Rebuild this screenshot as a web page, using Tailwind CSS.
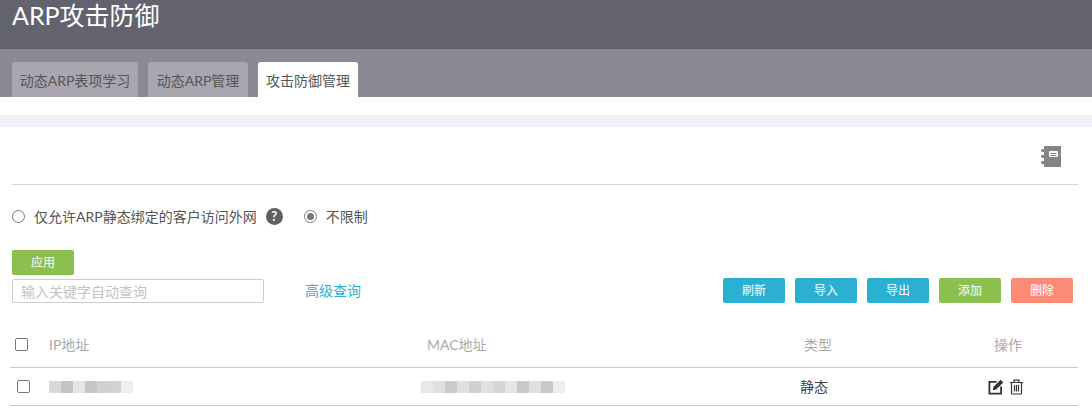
<!DOCTYPE html>
<html lang="zh-CN">
<head>
    <meta charset="UTF-8">
    <title>ARP攻击防御</title>
    <script src="https://cdn.jsdelivr.net/npm/@tailwindcss/browser@4"></script>
</head>
<body class="bg-white overflow-hidden text-[14px] text-[#555] font-['Lato','Noto_Sans_CJK_SC',sans-serif]">

<!-- Title -->
<div class="h-[49px] bg-[#62636f] px-3">
    <h1 class="text-[25px] leading-[30px] text-white">ARP攻击防御</h1>
</div>

<!-- Tabs -->
<div class="h-[48px] bg-[#8c8994] px-3 pt-[13px] flex gap-[10px] text-[14px]">
    <div class="w-[126px] h-[35px] leading-[37px] text-center rounded-t-[3px] bg-[#a9a6b1]">动态ARP表项学习</div>
    <div class="w-[100px] h-[35px] leading-[37px] text-center rounded-t-[3px] bg-[#a9a6b1]">动态ARP管理</div>
    <div class="w-[100px] h-[35px] leading-[37px] text-center rounded-t-[3px] bg-white">攻击防御管理</div>
</div>

<div class="mt-[18px] h-[12px] bg-[#eeeff8]"></div>

<div class="px-3 pr-[14px]">
    <!-- Guide icon -->
    <div class="h-[58px] border-b border-[#d4d4d4] flex justify-end pt-[19px] pr-[17px]">
        <svg width="20" height="21" viewBox="0 0 20 21" fill="#858585">
            <rect x="3" y="0" width="17" height="21" />
            <rect x="8" y="5" width="9" height="6" rx="1" fill="#fff" />
            <rect x="9.5" y="7" width="6" height="1" fill="#858585" />
            <rect x="9.5" y="9" width="6" height="1" fill="#858585" />
            <rect x="0" y="3" width="6" height="3" rx="1.5" />
            <rect x="0" y="9" width="6" height="3" rx="1.5" />
            <rect x="0" y="15" width="6" height="3" rx="1.5" />
        </svg>
    </div>

    <!-- Radios -->
    <div class="h-[65px] pb-[2px] flex items-center">
        <span class="w-[13px] h-[13px] rounded-full border border-[#777] bg-white"></span>
        <span class="ml-[9px]">仅允许ARP静态绑定的客户访问外网</span>
        <span class="ml-[9px] w-[17px] h-[17px] rounded-full bg-[#606060] text-white text-[13px] leading-[17px] text-center font-bold">?</span>
        <span class="ml-[21px] w-[13px] h-[13px] rounded-full border border-[#777] flex items-center justify-center">
            <span class="w-[7px] h-[7px] rounded-full bg-[#777]"></span>
        </span>
        <span class="ml-[9px]">不限制</span>
    </div>

    <button class="block w-[62px] h-[25px] rounded-[2px] bg-[#8bc04f] text-white text-[12px]">应用</button>

    <!-- Search and actions -->
    <div class="mt-[3px] flex items-end justify-between">
        <div class="flex items-center">
            <input class="w-[252px] h-[24px] border border-[#ccc] rounded-[2px] px-2 text-[14px] placeholder:text-[#c4c4c4]" placeholder="输入关键字自动查询">
            <a class="ml-[41px] mb-[2px] text-[14px] text-[#2db0d3]">高级查询</a>
        </div>
        <div class="flex gap-[10px] pr-[5px] text-white text-[12px]">
            <button class="w-[62px] h-[25px] rounded-[2px] bg-[#2cb0d2]">刷新</button>
            <button class="w-[62px] h-[25px] rounded-[2px] bg-[#2cb0d2]">导入</button>
            <button class="w-[62px] h-[25px] rounded-[2px] bg-[#2cb0d2]">导出</button>
            <button class="w-[62px] h-[25px] rounded-[2px] bg-[#8bc04f]">添加</button>
            <button class="w-[62px] h-[25px] rounded-[2px] bg-[#fc8b75]">删除</button>
        </div>
    </div>

    <!-- Table -->
    <div class="mt-[22px]">
        <div class="h-[43px] pb-[4px] border-b border-[#ccc] -ml-[2px] grid grid-cols-[39px_378px_313px_200px_1fr] items-center text-[#aaa]">
            <span class="pl-[5px] flex"><span class="w-[13px] h-[13px] rounded-[2px] border border-[#777]"></span></span>
            <span>IP地址</span>
            <span>MAC地址</span>
            <span class="pl-[64px]">类型</span>
            <span class="pl-[54px]">操作</span>
        </div>
        <div class="h-[38px] border-b border-[#ccc] -ml-[2px] grid grid-cols-[39px_372px_319px_200px_1fr] items-center text-[#444]">
            <span class="pl-[7px] flex"><span class="w-[13px] h-[13px] rounded-[2px] border border-[#777]"></span></span>
            <span class="flex h-[12px]">
                <i class="w-[12px] bg-[#d8d8d8]"></i><i class="w-[12px] bg-[#c4c4c4]"></i><i class="w-[12px] bg-[#e6e6e6]"></i><i class="w-[12px] bg-[#c6c6c6]"></i><i class="w-[12px] bg-[#d0d0d0]"></i><i class="w-[12px] bg-[#d2d2d2]"></i><i class="w-[12px] bg-[#eeeeee]"></i>
            </span>
            <span class="flex h-[12px]">
                <i class="w-[12px] bg-[#e8e8e8]"></i><i class="w-[12px] bg-[#e0e0e0]"></i><i class="w-[12px] bg-[#cccccc]"></i><i class="w-[12px] bg-[#e0e0e0]"></i><i class="w-[12px] bg-[#d0d0d0]"></i><i class="w-[12px] bg-[#e0e0e0]"></i><i class="w-[12px] bg-[#d6d6d6]"></i><i class="w-[12px] bg-[#e6e6e6]"></i><i class="w-[12px] bg-[#c8c8c8]"></i><i class="w-[12px] bg-[#e0e0e0]"></i><i class="w-[12px] bg-[#c8c8c8]"></i><i class="w-[12px] bg-[#eeeeee]"></i>
            </span>
            <span class="pl-[60px]">静态</span>
            <span class="pl-[48px] flex items-center gap-[5px]">
                <svg width="16" height="16" viewBox="0 0 16 16" fill="none" stroke="#333" stroke-width="1.8">
                    <path d="M8.5 2.9H1.4V14.6H13.1V7.5" />
                    <path d="M4.8 11.2L5.5 7.8L12.6 0.7L15.3 3.4L8.2 10.5Z" fill="#333" stroke="none" />
                </svg>
                <svg width="15" height="16" viewBox="0 0 15 16" fill="none" stroke="#333" stroke-width="1.2">
                    <path d="M1 3.5H14M5 3.5V1.2H10V3.5M2.5 3.5V14C2.5 14.6 3 15 3.5 15H11.5C12 15 12.5 14.6 12.5 14V3.5" />
                    <path d="M5.5 6V12.5M7.5 6V12.5M9.5 6V12.5" />
                </svg>
            </span>
        </div>
    </div>
</div>
</body>
</html>
